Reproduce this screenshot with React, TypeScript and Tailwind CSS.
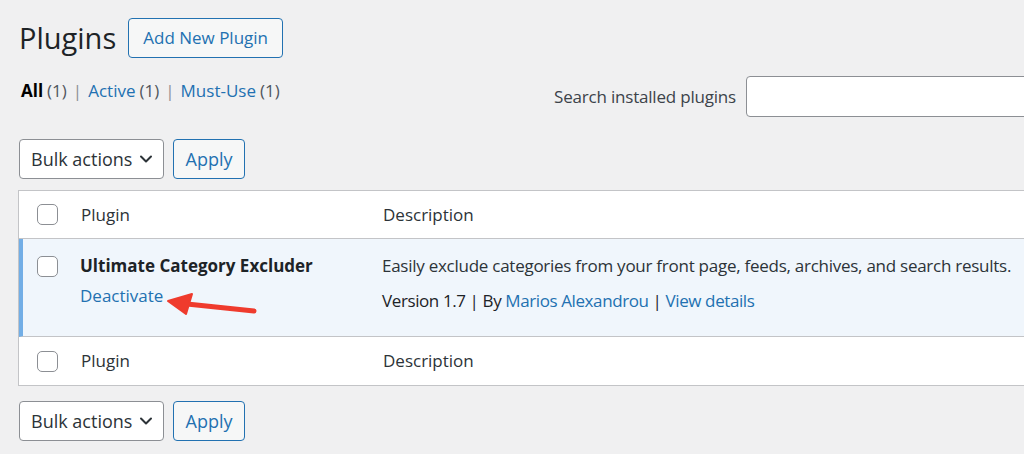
import React from "react";

const font = { fontFamily: '"Open Sans", "Noto Sans", sans-serif' };

function Checkbox() {
  return <span className="block w-[21px] h-[21px] rounded-[5px] border border-[#8c8f94] bg-white" />;
}

function Chevron() {
  return (
    <svg width="14" height="14" viewBox="0 0 14 14" fill="none">
      <path d="M2 4.5 L7 9.5 L12 4.5" stroke="#2c3338" strokeWidth="2" strokeLinecap="round" strokeLinejoin="round" />
    </svg>
  );
}

function BulkBar() {
  return (
    <div className="flex items-center gap-[9px] pl-[19px]">
      <div className="flex items-center justify-between w-[145px] h-[40px] rounded-[4px] border border-[#8c8f94] bg-white pl-[11px] pr-[10px] text-[18px] text-[#2c3338]">
        <span>Bulk actions</span>
        <Chevron />
      </div>
      <div className="flex items-center justify-center w-[72px] h-[40px] rounded-[4px] border border-[#2271b1] bg-[#f6f7f7] text-[18px] text-[#2271b1]">
        Apply
      </div>
    </div>
  );
}

export default function App() {
  return (
    <div className="w-[1024px] h-[454px] overflow-hidden bg-[#f0f0f1] text-[#3c434a]" style={font}>
      <div className="flex items-center pt-[18px] pl-[19px] gap-[12px]">
        <h1 className="text-[29px] leading-[40px] text-[#1d2327]">Plugins</h1>
        <div className="flex items-center h-[40px] px-[14px] rounded-[4px] border border-[#2271b1] bg-[#f6f7f7] text-[17px] text-[#2271b1]">
          Add New Plugin
        </div>
      </div>
      <div className="flex justify-between items-start pl-[21px]">
        <div className="mt-[21px] flex items-center text-[17px] leading-[24px]">
          <span className="font-bold text-[#000]">All</span>
          <span className="ml-[4px] text-[#50575e]">(1)</span>
          <span className="mx-[6px] text-[#8c8f94]">|</span>
          <span className="text-[#2271b1]">Active</span>
          <span className="ml-[4px] text-[#50575e]">(1)</span>
          <span className="mx-[6px] text-[#8c8f94]">|</span>
          <span className="text-[#2271b1]">Must-Use</span>
          <span className="ml-[4px] text-[#50575e]">(1)</span>
        </div>
        <div className="mt-[18px] flex items-center gap-[10px] -mr-[10px]">
          <span className="text-[17px] text-[#3c434a] tracking-[-0.2px]">Search installed plugins</span>
          <div className="w-[288px] h-[41px] rounded-[4px] border border-[#8c8f94] bg-white" />
        </div>
      </div>
      <div className="mt-[22px]">
        <BulkBar />
      </div>
      <div className="ml-[18px] mt-[11px] border border-[#c3c4c7] border-r-0 bg-white">
        <div className="flex items-center h-[48px] border-b border-[#c3c4c7]">
          <div className="pl-[18px] w-[62px]"><Checkbox /></div>
          <div className="w-[302px] text-[17px] text-[#2c3338]">Plugin</div>
          <div className="text-[17px] text-[#2c3338]">Description</div>
        </div>
        <div className="relative flex h-[98px] bg-[#f0f6fc] border-l-[4px] border-[#72aee6] border-b border-b-[#c3c4c7]">
          <div className="pl-[14px] pt-[17px] w-[57px]"><Checkbox /></div>
          <div className="w-[302px] pt-[15px]">
            <div className="text-[17px] font-bold text-[#1d2327] leading-[24px]">Ultimate Category Excluder</div>
            <div className="mt-[6px] text-[17px] text-[#2271b1] leading-[24px]">Deactivate</div>
          </div>
          <div className="pt-[15px] text-[17px] leading-[24px]">
            <div className="text-[#2c3338] tracking-[-0.26px]">Easily exclude categories from your front page, feeds, archives, and search results.</div>
            <div className="mt-[11px] text-[#1d2327] tracking-[-0.4px]">
              Version 1.7 | By <span className="text-[#2271b1]">Marios Alexandrou</span> | <span className="text-[#2271b1]">View details</span>
            </div>
          </div>
          <svg className="absolute left-[123px] top-[50px]" width="114" height="30" viewBox="146 288 114 30">
            <path d="M187 303 L254 310" stroke="#ef3b2d" strokeWidth="5" strokeLinecap="round" />
            <path d="M168 300 L192 293 L186 313 Z" fill="#ef3b2d" stroke="#ef3b2d" strokeWidth="2" strokeLinejoin="round" />
          </svg>
        </div>
        <div className="flex items-center h-[48px]">
          <div className="pl-[18px] w-[62px]"><Checkbox /></div>
          <div className="w-[302px] text-[17px] text-[#2c3338]">Plugin</div>
          <div className="text-[17px] text-[#2c3338]">Description</div>
        </div>
      </div>
      <div className="mt-[15px]">
        <BulkBar />
      </div>
    </div>
  );
}
